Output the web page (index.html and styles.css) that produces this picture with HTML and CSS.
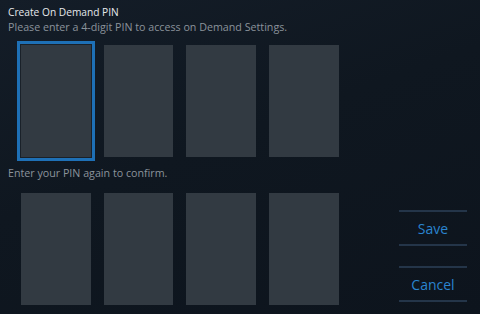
FILE: index.html
```html
<!DOCTYPE html>
<html>
<head>
<meta charset="utf-8">
<link rel="stylesheet" href="styles.css">
</head>
<body>
<div class="screen">
  <div class="main">
    <div class="title">Create On Demand PIN</div>
    <div class="hint">Please enter a 4-digit PIN to access on Demand Settings.</div>
    <div class="row row-top">
      <div class="box focused"></div>
      <div class="box"></div>
      <div class="box"></div>
      <div class="box"></div>
    </div>
    <div class="hint hint-confirm">Enter your PIN again to confirm.</div>
    <div class="row row-bottom">
      <div class="box"></div>
      <div class="box"></div>
      <div class="box"></div>
      <div class="box"></div>
    </div>
  </div>
  <div class="actions">
    <div class="btn">Save</div>
    <div class="btn">Cancel</div>
  </div>
</div>
</body>
</html>
```
FILE: styles.css
```css
html, body {
  margin: 0;
  padding: 0;
}
body {
  width: 480px;
  height: 314px;
  overflow: hidden;
  background: #0f1620;
  font-family: "Open Sans", "Noto Sans", sans-serif;
}
.screen {
  width: 480px;
  height: 314px;
  display: flex;
  background: linear-gradient(160deg, #141d28 0%, #0f1720 45%, #0d141d 100%);
}
.main {
  display: flex;
  flex-direction: column;
  padding: 5px 0 0 8px;
}
.title {
  font-size: 10.2px;
  line-height: 15px;
  color: #e6e9ec;
}
.hint {
  font-size: 10.7px;
  line-height: 15px;
  color: #8b939b;
}
.row {
  display: flex;
  gap: 13.2px;
  margin-left: 13px;
}
.row-top {
  margin-top: 10px;
}
.hint-confirm {
  margin-top: 9px;
}
.row-bottom {
  margin-top: 12px;
}
.box {
  width: 69.5px;
  height: 112px;
  background: #323a42;
}
.box.focused {
  outline: 3px solid #1e70b6;
  outline-offset: 1px;
  box-shadow: 0 0 0 1px #1a2129;
}
.actions {
  margin-left: auto;
  display: flex;
  flex-direction: column;
  justify-content: flex-end;
  gap: 20px;
  padding: 0 13px 12px 0;
}
.btn {
  width: 68px;
  height: 32px;
  border-top: 2px solid #243549;
  border-bottom: 2px solid #243549;
  display: flex;
  align-items: center;
  justify-content: center;
  font-size: 14px;
  color: #2a84cf;
}
```
